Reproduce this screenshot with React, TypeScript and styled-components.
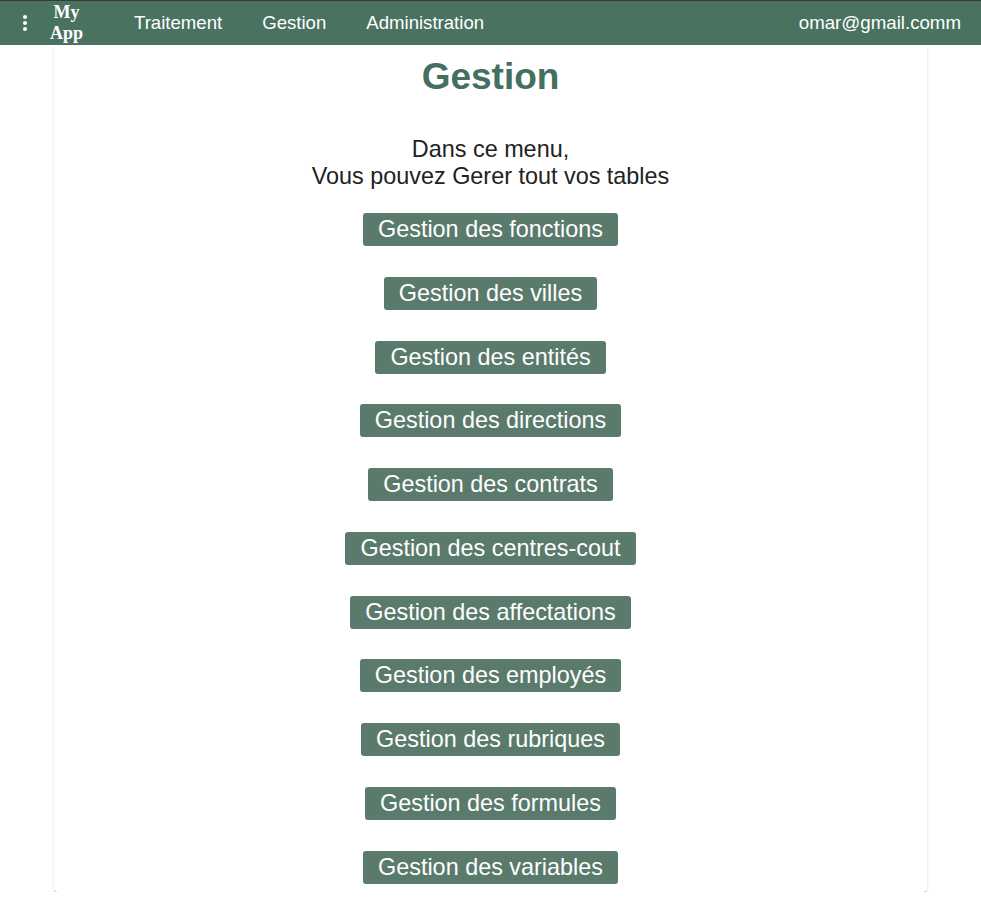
import React from "react";
import styled, { createGlobalStyle } from "styled-components";

const GlobalStyle = createGlobalStyle`
  html, body {
    margin: 0;
    padding: 0;
    background: #ffffff;
    font-family: "Liberation Sans", Arial, sans-serif;
  }
`;

const Header = styled.header`
  display: flex;
  align-items: center;
  height: 44px;
  border-top: 1px solid #3a3a3a;
  background: #497261;
  color: #ffffff;
  padding: 0 20px 0 13px;
  position: relative;
  z-index: 2;
`;

const IconButton = styled.button`
  display: flex;
  align-items: center;
  justify-content: center;
  width: 24px;
  height: 24px;
  padding: 0;
  border: none;
  background: transparent;
  color: #ffffff;
  cursor: pointer;
`;

const Brand = styled.div`
  margin-left: 13px;
  width: 33px;
  text-align: center;
  font-family: "Liberation Serif", "Times New Roman", serif;
  font-weight: 700;
  font-size: 18px;
  line-height: 21px;
  white-space: pre-line;
`;

const Nav = styled.nav`
  display: flex;
  gap: 40px;
  margin-left: 51px;
`;

const NavLink = styled.a`
  color: #ffffff;
  font-size: 18.6px;
  text-decoration: none;
  cursor: pointer;
`;

const UserEmail = styled.span`
  margin-left: auto;
  font-size: 18.7px;
`;

const Card = styled.main`
  width: 873px;
  margin: 0 auto;
  box-sizing: border-box;
  padding: 11px 0 8px;
  background: #ffffff;
  border-radius: 0 0 4px 4px;
  box-shadow: 0px 2px 1px -1px rgba(0, 0, 0, 0.25), 0px 1px 1px 0px rgba(0, 0, 0, 0.16),
    0px 1px 3px 0px rgba(0, 0, 0, 0.12);
  display: flex;
  flex-direction: column;
  align-items: center;
`;

const Title = styled.h1`
  margin: 0;
  font-size: 37px;
  font-weight: 700;
  color: #456f5e;
  line-height: normal;
`;

const Intro = styled.p`
  margin: 38px 0 0;
  font-size: 23.4px;
  line-height: normal;
  color: #222222;
  text-align: center;
`;

const ButtonList = styled.div`
  display: flex;
  flex-direction: column;
  align-items: center;
  gap: 30.75px;
  margin-top: 23px;
`;

const MenuButton = styled.button`
  font-family: "Liberation Sans", Arial, sans-serif;
  font-size: 23.4px;
  line-height: normal;
  padding: 3px 15px;
  border: none;
  border-radius: 3px;
  background: #5a7a6c;
  color: #ffffff;
  cursor: pointer;
`;

const KebabIcon = () => (
  <svg width="24" height="24" viewBox="0 0 24 24" fill="currentColor" aria-hidden>
    <circle cx="12" cy="6" r="2" />
    <circle cx="12" cy="12" r="2" />
    <circle cx="12" cy="18" r="2" />
  </svg>
);

const items = [
  "Gestion des fonctions",
  "Gestion des villes",
  "Gestion des entités",
  "Gestion des directions",
  "Gestion des contrats",
  "Gestion des centres-cout",
  "Gestion des affectations",
  "Gestion des employés",
  "Gestion des rubriques",
  "Gestion des formules",
  "Gestion des variables",
];

export default function App() {
  return (
    <>
      <GlobalStyle />
      <Header>
        <IconButton aria-label="menu">
          <KebabIcon />
        </IconButton>
        <Brand>{"My\nApp"}</Brand>
        <Nav>
          <NavLink>Traitement</NavLink>
          <NavLink>Gestion</NavLink>
          <NavLink>Administration</NavLink>
        </Nav>
        <UserEmail>omar@gmail.comm</UserEmail>
      </Header>
      <Card>
        <Title>Gestion</Title>
        <Intro>
          Dans ce menu,
          <br />
          Vous pouvez Gerer tout vos tables
        </Intro>
        <ButtonList>
          {items.map((label) => (
            <MenuButton key={label}>{label}</MenuButton>
          ))}
        </ButtonList>
      </Card>
    </>
  );
}
